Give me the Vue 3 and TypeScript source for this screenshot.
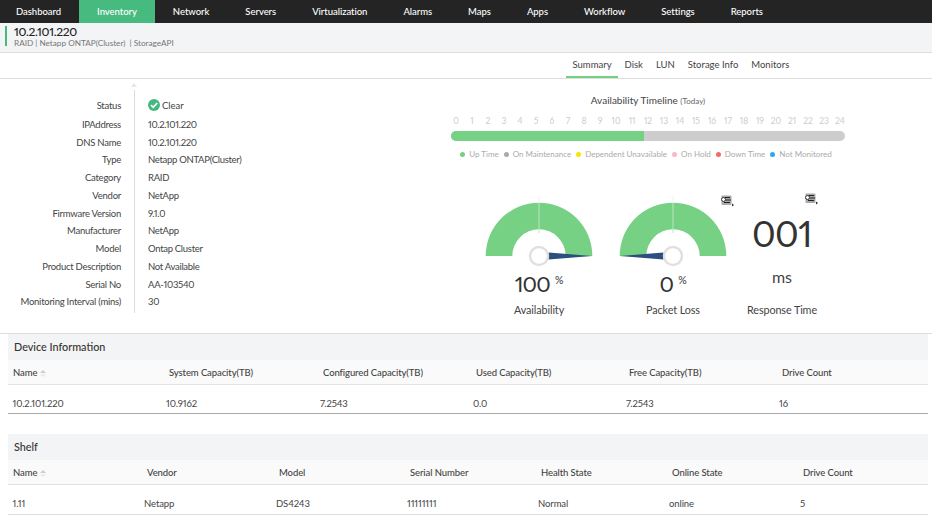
<script setup lang="ts">
const nav: string[] = ['Dashboard','Inventory','Network','Servers','Virtualization','Alarms','Maps','Apps','Workflow','Settings','Reports']
const tabs: string[] = ['Summary','Disk','LUN','Storage Info','Monitors']
const props: [string, string][] = [
  ['IPAddress','10.2.101.220'],['DNS Name','10.2.101.220'],['Type','Netapp ONTAP(Cluster)'],['Category','RAID'],
  ['Vendor','NetApp'],['Firmware Version','9.1.0'],['Manufacturer','NetApp'],['Model','Ontap Cluster'],
  ['Product Description','Not Available'],['Serial No','AA-103540'],['Monitoring Interval (mins)','30'],
]
const hours: number[] = Array.from({ length: 25 }, (_, i) => i)
const legend: [string, string][] = [
  ['Up Time','#74d184'],['On Maintenance','#aaaaaa'],['Dependent Unavailable','#f7e600'],['On Hold','#f7b9c6'],['Down Time','#f26a6a'],['Not Monitored','#2ea6ee'],
]
const deviceCols = ['Name','System Capacity(TB)','Configured Capacity(TB)','Used Capacity(TB)','Free Capacity(TB)','Drive Count']
const deviceRow = ['10.2.101.220','10.9162','7.2543','0.0','7.2543','16']
const shelfCols = ['Name','Vendor','Model','Serial Number','Health State','Online State','Drive Count']
const shelfRow = ['1.11','Netapp','DS4243','11111111','Normal','online','5']
</script>

<template>
  <div class="page">
    <nav class="nav">
      <a v-for="n in nav" :key="n" class="nav-item" :class="{ active: n === 'Inventory' }">{{ n }}</a>
    </nav>
    <header class="sub">
      <div class="sub-inner">
        <div class="sub-title">10.2.101.220</div>
        <div class="sub-meta">RAID | Netapp ONTAP(Cluster)&nbsp; | StorageAPI</div>
      </div>
    </header>
    <div class="tabs">
      <a v-for="t in tabs" :key="t" class="tab" :class="{ active: t === 'Summary' }">{{ t }}</a>
    </div>

    <section class="main">
      <div class="info">
        <span class="info-caret"></span>
        <div class="info-row first">
          <span class="k">Status</span>
          <span class="v status">
            <svg width="12" height="12" viewBox="0 0 12 12"><circle cx="6" cy="6" r="6" fill="#45b87f"/><path d="M3 6.2 5.2 8.3 9.2 4" fill="none" stroke="#fff" stroke-width="1.8"/></svg>
            Clear
          </span>
        </div>
        <div v-for="p in props" :key="p[0]" class="info-row">
          <span class="k">{{ p[0] }}</span>
          <span class="v">{{ p[1] }}</span>
        </div>
      </div>

      <div class="right">
        <div class="tl-title">Availability Timeline <small>(Today)</small></div>
        <div class="hours"><span v-for="h in hours" :key="h">{{ h }}</span></div>
        <div class="bar"><div class="bar-fill"></div></div>
        <div class="legend">
          <span v-for="l in legend" :key="l[0]" class="lg"><i :style="{ background: l[1] }"></i>{{ l[0] }}</span>
        </div>

        <div class="gauges">
          <div class="gauge">
            <svg width="120" height="78" viewBox="0 0 120 78">
              <path d="M6.7 65a53.3 53.3 0 0 1 106.6 0h-26.6a26.7 26.7 0 0 0-53.4 0z" fill="#76d184"/>
              <path d="M60 5V12" stroke="#f0f0f0" stroke-width="1"/>
              <path d="M60 12V42" stroke="#b9e8c1" stroke-width="1"/>
              <path d="M69.5 61.6 113.3 65 69.5 68.4z" fill="#2c4f7f"/>
              <circle cx="60" cy="65" r="9" fill="#fff" stroke="#e0e0e0" stroke-width="2.4"/>
            </svg>
            <div class="val">100<sup>%</sup></div>
            <div class="lab">Availability</div>
          </div>
          <div class="gauge">
            <svg width="120" height="78" viewBox="0 0 120 78">
              <path d="M6.7 65a53.3 53.3 0 0 1 106.6 0h-26.6a26.7 26.7 0 0 0-53.4 0z" fill="#76d184"/>
              <path d="M60 5V12" stroke="#f0f0f0" stroke-width="1"/>
              <path d="M60 12V42" stroke="#b9e8c1" stroke-width="1"/>
              <path d="M50.5 61.6 6.7 65 50.5 68.4z" fill="#2c4f7f"/>
              <circle cx="60" cy="65" r="9" fill="#fff" stroke="#e0e0e0" stroke-width="2.4"/>
            </svg>
            <div class="val">0<sup>%</sup></div>
            <div class="lab">Packet Loss</div>
            <svg class="mini mini-a" width="14" height="12" viewBox="0 0 14 12">
              <rect x="1.5" y="0.5" width="10" height="9.5" rx="1" fill="#a9a9a9"/>
              <circle cx="3.5" cy="4.5" r="2" fill="#fff" stroke="#333" stroke-width="1"/>
              <path d="M5 2.5h5M6 5h5M4 7.5h6" stroke="#222" stroke-width="1"/>
              <path d="M12 8.5l2 1.5-2 1.5z" fill="#333"/>
            </svg>
          </div>
          <div class="resp">
            <div class="big">001</div>
            <div class="ms">ms</div>
            <div class="lab">Response Time</div>
            <svg class="mini mini-b" width="14" height="12" viewBox="0 0 14 12">
              <rect x="1.5" y="0.5" width="10" height="9.5" rx="1" fill="#a9a9a9"/>
              <circle cx="3.5" cy="4.5" r="2" fill="#fff" stroke="#333" stroke-width="1"/>
              <path d="M5 2.5h5M6 5h5M4 7.5h6" stroke="#222" stroke-width="1"/>
              <path d="M12 8.5l2 1.5-2 1.5z" fill="#333"/>
            </svg>
          </div>
        </div>
      </div>
    </section>

    <section class="panel">
      <h3 class="panel-title">Device Information</h3>
      <div class="grid six head">
        <span v-for="(c, i) in deviceCols" :key="c">{{ c }}<svg v-if="i === 0" class="sort" width="6" height="7" viewBox="0 0 6 7"><path d="M3 0 6 3H0z" fill="#ccc"/><path d="M0 4.2h6L3 7z" fill="#e8e8e8"/></svg></span>
      </div>
      <div class="grid six row strong">
        <span v-for="(c, i) in deviceRow" :key="i">{{ c }}</span>
      </div>
    </section>

    <section class="panel shelf">
      <h3 class="panel-title">Shelf</h3>
      <div class="grid seven head">
        <span v-for="(c, i) in shelfCols" :key="c">{{ c }}<svg v-if="i === 0" class="sort" width="6" height="7" viewBox="0 0 6 7"><path d="M3 0 6 3H0z" fill="#ccc"/><path d="M0 4.2h6L3 7z" fill="#e8e8e8"/></svg></span>
      </div>
      <div class="grid seven row tall">
        <span v-for="(c, i) in shelfRow" :key="i">{{ c }}</span>
      </div>
    </section>
  </div>
</template>

<style>
html, body { background: #fff; }
</style>

<style scoped>
.page { width: 932px; height: 518px; overflow: hidden; font-family: Lato, "Noto Sans", sans-serif; font-variant-numeric: proportional-nums; color: #333; font-size: 9.5px; background: #fff; }
.nav { display: flex; height: 23px; background: #242424; }
.nav-item { display: flex; align-items: center; padding: 0 18px 1px; color: #fff; font-size: 9.5px; font-weight: 500; letter-spacing: -0.04px; }
.nav-item:first-child { padding-left: 16px; }
.nav-item.active { background: #47bb7f; }
.sub { height: 30px; background: #f3f4f6; border-bottom: 1px solid #ddd; padding-top: 4px; padding-left: 5px; box-sizing: border-box; }
.sub-inner { border-left: 2px solid #47bb7f; padding-left: 7px; height: 20px; }
.sub-title { font-size: 12px; line-height: 11px; color: #222; font-weight: 500; margin-top: -1px; letter-spacing: -0.3px; }
.sub-meta { font-size: 8.2px; line-height: 11px; color: #777; margin-top: 1px; }
.tabs { display: flex; height: 26px; box-sizing: border-box; border-bottom: 1px solid #ddd; padding-left: 566px; }
.tab { padding: 0 6.5px; font-size: 9.5px; line-height: 24px; color: #444; }
.tab.active { border-bottom: 2px solid #74d184; height: 25px; box-sizing: border-box; }
.main { display: flex; height: 255px; box-sizing: border-box; border-bottom: 1px solid #ddd; }
.info { width: 448px; position: relative; padding-top: 16px; box-sizing: border-box; }
.info-caret { position: absolute; left: 131px; top: 4px; border: 3px solid transparent; border-top: 0; border-bottom: 4px solid #e8e8e8; }
.info::after { content: ""; position: absolute; left: 134px; top: 11px; height: 223px; width: 1px; background: #ddd; }
.info-row { display: flex; height: 17.75px; align-items: center; }
.info-row.first { height: 20.5px; }
.k { width: 121px; text-align: right; color: #444; letter-spacing: -0.25px; }
.v { margin-left: 27px; color: #444; letter-spacing: -0.3px; }
.status { display: flex; align-items: center; gap: 2px; letter-spacing: 0; }
.right { width: 400px; padding-top: 15px; }
.tl-title { text-align: center; font-size: 10px; line-height: 12px; color: #444; }
.tl-title small { font-size: 8px; color: #666; }
.hours { display: flex; margin-top: 8px; height: 12px; color: #ccc; font-size: 8.5px; line-height: 12px; }
.hours span { width: 16px; text-align: center; }
.bar { margin: 4px 3px 0; height: 10px; border-radius: 5px; background: #cdcdcd; overflow: hidden; }
.bar-fill { width: 193px; height: 100%; background: #76d184; }
.legend { display: flex; justify-content: center; margin: 8px 0 0 -4px; gap: 5px; font-size: 8px; line-height: 10px; color: #aaa; }
.lg { display: flex; align-items: center; gap: 4px; }
.lg i { width: 5px; height: 5px; border-radius: 50%; display: block; }
.gauges { display: flex; gap: 14px; margin: 32px 0 0 31px; width: 400px; }
.gauge { position: relative; width: 120px; display: flex; flex-direction: column; align-items: center; }
.gauge > svg:first-child { display: block; }
.val { font-size: 22px; line-height: 28px; margin-top: 1px; color: #333; display: flex; align-items: flex-start; letter-spacing: -0.8px; }
.val sup { font-size: 10.5px; line-height: 14px; margin: 3px 0 0 5px; letter-spacing: 0; }
.lab { font-size: 10.8px; line-height: 14px; margin-top: 5px; color: #444; white-space: nowrap; letter-spacing: -0.1px; }
.resp { position: relative; width: 70px; display: flex; flex-direction: column; align-items: center; }
.big { font-size: 36px; line-height: 44px; margin-top: 20px; color: #333; letter-spacing: -0.5px; }
.ms { font-size: 16px; line-height: 20px; margin-top: 12px; color: #444; }
.resp .lab { margin-top: 16px; }
.mini { position: absolute; }
.mini-a { left: 107px; top: 4px; }
.mini-b { left: 57px; top: 2px; }
.panel { margin-left: 8px; width: 920px; }
.shelf { margin-top: 20px; }
.panel-title { margin: 0; height: 26px; line-height: 26px; padding-left: 6px; background: #f3f4f6; font-size: 10.8px; font-weight: 500; color: #333; }
.grid { display: grid; }
.six { grid-template-columns: 156px 154px repeat(4, 153px); }
.seven { grid-template-columns: 134px 132px repeat(5, 131px); }
.head { height: 25px; box-sizing: border-box; line-height: 26px; background: #fafafa; border-bottom: 1px solid #e3e3e3; font-size: 9.5px; font-weight: 500; color: #444; }
.head span { padding-left: 5px; letter-spacing: -0.1px; }
.row { height: 29px; box-sizing: border-box; line-height: 24px; padding-top: 7px; border-bottom: 1px solid #ddd; color: #444; font-size: 9.5px; letter-spacing: -0.1px; }
.row.tall { height: 30px; padding-top: 7px; }
.row span { padding-left: 2px; }
.row span:first-child { padding-left: 4.5px; }
.row.strong { border-bottom-color: #aaa; }
.sort { margin-left: 3px; vertical-align: -1px; }
</style>
